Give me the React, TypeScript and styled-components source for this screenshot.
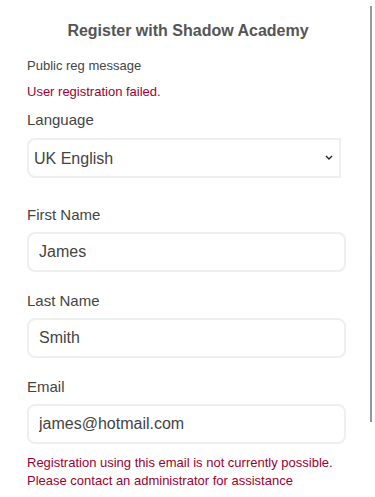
import React from 'react';
import styled, { createGlobalStyle } from 'styled-components';

const GlobalStyle = createGlobalStyle`
    html, body {
        margin: 0;
        padding: 0;
        background: #ffffff;
        font-family: "Liberation Sans", Arial, sans-serif;
    }
`;

export default function App() {
    return (
        <>
            <GlobalStyle />
            <Page>
                <Heading>Register with Shadow Academy</Heading>
                <Notice>Public reg message</Notice>
                <ErrorText>User registration failed.</ErrorText>

                <Group gap={28}>
                    <Label>Language</Label>
                    <SelectWrap>
                        <Select defaultValue="en-GB">
                            <option value="en-GB">UK English</option>
                            <option value="en-US">US English</option>
                        </Select>
                        <Chevron viewBox="0 0 8 5" aria-hidden="true">
                            <path d="M1 1 L4 4 L7 1" fill="none" stroke="#222" strokeWidth="1.4" />
                        </Chevron>
                    </SelectWrap>
                </Group>

                <Field label="First Name" value="James" />
                <Field label="Last Name" value="Smith" />
                <Field label="Email" value="james@hotmail.com">
                    <FieldError>
                        Registration using this email is not currently possible.
                        <br />
                        Please contact an administrator for assistance
                    </FieldError>
                </Field>

                <ScrollThumb />
            </Page>
        </>
    );
}

interface FieldProps {
    label: string;
    value: string;
    gap?: number;
    children?: React.ReactNode;
}
const Field: React.FC<FieldProps> = ({ label, value, gap = 20, children }) => {
    return (
        <Group gap={gap}>
            <Label>{label}</Label>
            <Input defaultValue={value} />
            {children}
        </Group>
    );
}

const Page = styled.div`
    position: relative;
    display: flex;
    flex-direction: column;
    padding: 21px 26px 0 27px;
    height: 497px;
    box-sizing: border-box;
    overflow: hidden;
`;

const Heading = styled.h2`
    margin: 0 0 17px 0;
    font-size: 16px;
    line-height: 20px;
    font-weight: bold;
    color: #555555;
    text-align: center;
`;

const Notice = styled.p`
    margin: 0 0 10px 0;
    font-size: 13px;
    line-height: 16px;
    color: #444444;
`;

const ErrorText = styled.p`
    margin: 0 0 11px 0;
    font-size: 13px;
    line-height: 16px;
    color: #a00030;
`;

const Group = styled.div<{ gap: number }>`
    display: flex;
    flex-direction: column;
    margin-bottom: ${props => props.gap}px;
`;

const Label = styled.label`
    font-size: 15px;
    line-height: 18px;
    color: #444444;
    margin-bottom: 8px;
`;

const SelectWrap = styled.div`
    position: relative;
    width: 314px;
    margin-top: 1px;
`;

const Select = styled.select`
    appearance: none;
    -webkit-appearance: none;
    width: 100%;
    height: 40px;
    box-sizing: border-box;
    border: 2px solid #edf0ef;
    border-radius: 8px 0 0 8px;
    background: #ffffff;
    padding: 0 20px 0 5px;
    font-family: "Liberation Sans", Arial, sans-serif;
    font-size: 16px;
    color: #444444;
    outline: none;
`;

const Chevron = styled.svg`
    position: absolute;
    right: 8px;
    top: 17px;
    width: 8px;
    height: 5px;
    pointer-events: none;
`;

const Input = styled.input`
    width: 319px;
    height: 40px;
    box-sizing: border-box;
    border: 2px solid #edf0ef;
    border-radius: 8px;
    background: #ffffff;
    padding: 0 10px;
    font-family: "Liberation Sans", Arial, sans-serif;
    font-size: 16px;
    color: #444444;
    outline: none;
`;

const FieldError = styled.p`
    margin: 10px 0 0 0;
    font-size: 13px;
    line-height: 18px;
    color: #a00030;
`;

const ScrollThumb = styled.div`
    position: absolute;
    top: 6px;
    left: 370px;
    width: 2px;
    height: 416px;
    background: linear-gradient(to bottom, #9a9a9a 0%, #9a9a9a 55%, #8b97a6 62%, #8b97a6 100%);
`;
